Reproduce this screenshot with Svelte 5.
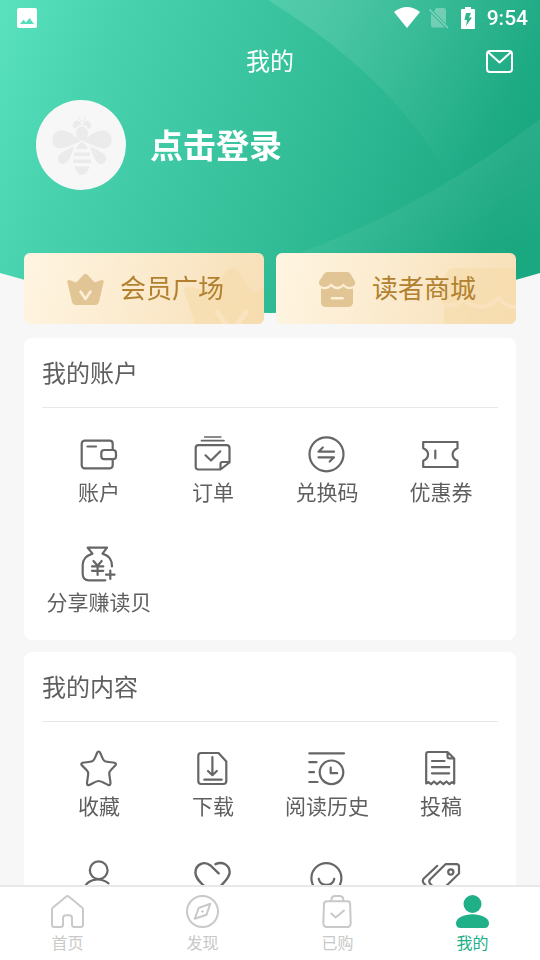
<script>
  const account = [
    { label: '账户', icon: 'wallet' },
    { label: '订单', icon: 'order' },
    { label: '兑换码', icon: 'exchange' },
    { label: '优惠券', icon: 'coupon' },
    { label: '分享赚读贝', icon: 'money' }
  ];
  const content = [
    { label: '收藏', icon: 'star' },
    { label: '下载', icon: 'download' },
    { label: '阅读历史', icon: 'history' },
    { label: '投稿', icon: 'draft' },
    { name: '关注', icon: 'person' },
    { name: '喜欢', icon: 'heart' },
    { name: '评论', icon: 'smile' },
    { name: '标签', icon: 'tag' }
  ];
  const tabs = [
    { label: '首页', icon: 'home' },
    { label: '发现', icon: 'compass' },
    { label: '已购', icon: 'bag' },
    { label: '我的', icon: 'me', active: true }
  ];

  const icons = {
    wallet:
      '<rect x=".7" y="4.7" width="31" height="27.6" rx="3"/><rect x="20.3" y="14" width="14.7" height="9.2" rx="3" fill="#fff"/><path d="M6.5 10.5H15"/>',
    order:
      '<path d="M9.500 1H26" stroke-width="1.300"/><path d="M6.500 4.700H29" stroke-width="1.700"/><path d="M25.500 33.500H3.500Q.7 33.500.7 30.700V12Q.7 9.200 3.500 9.200H31.500Q34.500 9.200 34.500 12V26.500ZM25.500 33V28Q25.500 26 27.500 26H34"/><path d="M10.500 19.300 16 24.500 25.300 15.300"/>',
    exchange:
      '<circle cx="17.500" cy="18.300" r="17"/><path d="M25 15.700H9.500L13.800 11.500M9.500 21.300H25L20.700 25.500"/>',
    coupon:
      '<path d="M.2 6H34.500V12.300C28 15 28 22 34.500 24.700V31H.2V24.700C6.700 22 6.700 15 .2 12.300Z"/><path d="M12.300 14.500V22.300"/>',
    money:
      '<path d="M24.300 34.300H8Q1.700 34.300 1.700 28V19C1.700 12 6 9.500 11.500 7.600L6.700 1.700H26L21.500 7.600C27.500 9.500 31 12.500 31 20.500"/><path d="M12.500 15 16.600 19.800 20.700 15M16.600 19.800V29M11 20.400H22.300M11 24.800H22.300M29.300 24.500V33M25 28.700H33.500"/>',
    star:
      '<path d="M17.600 1.500Q18.700 1.500 19.300 3C20.600 6 22 10.500 24 11.300C26.500 12.200 31 12.200 33.500 12.800Q35.700 13.800 34.500 15.300C32.500 17.500 28.500 20.500 28.300 22.800C28.100 25.500 29.500 30.500 29.500 33.500Q29 35.800 27.200 35C24 33.500 20.500 31 17.600 31C14.700 31 11.500 33.500 8.200 35Q6.300 35.800 6 33.500C6 30.500 7.400 25.500 7.200 22.800C7 20.500 2.700 17.500.8 15.300Q-.5 13.800 1.700 12.800C4.200 12.200 8.800 12.200 11.200 11.300C13.300 10.500 14.700 6 16 3Q16.500 1.500 17.600 1.500Z"/>',
    download:
      '<path d="M6 3H23.500L31.300 11.500V31Q31.300 34 28.300 34H6Q3.300 34 3.300 31V6Q3.300 3 6 3Z"/><path d="M17.400 7V25M13 21 17.400 25.200 21.800 21M9.300 29.700H26.700"/>',
    history:
      '<path d="M.3 3.300H35M.3 12.200H7.500M.3 22.200H5M.3 32H8.500"/><circle cx="22.500" cy="22.300" r="11.800"/><path d="M21.700 17.500V23.200H28.200"/>',
    draft:
      '<path d="M24.500 2H5.200Q3.200 2 3.200 4V33.500L5.500 32.200 8 34.200 11 31.500 14 34.200 17.200 31.500 20.400 34.200 23.500 31.500 26.500 34.200 29 32.200 31.200 33.500V8.500ZM24.500 2.500V6.500Q24.500 8.300 26.300 8.300H31"/><path d="M9 11H21.500M9 17.200H26.200M9 23.300H26.200"/>',
    person:
      '<circle cx="17.700" cy="10.300" r="8.900"/><path d="M4.500 25.500C9 18.500 20 17.500 27.500 23.300M4.500 25.500Q2 29 2 34H34"/>',
    heart:
      '<path d="M23.700 13.300 15.500 5.500C9 .3.500 4.500.4 12.500C.4 17.500 4 21 8 25L17.700 34 27 24.500C31 20.500 34.700 17 34.700 12.300C34.500 5 27.500.8 20.500 4.200" stroke-width="2.400"/>',
    smile:
      '<circle cx="17.400" cy="18.200" r="15"/><path d="M9.700 18.700C11.500 27 23.500 27 25.300 18.700"/>',
    tag:
      '<path d="M22.500 4.200H33.500Q36 4.200 36 6.700V13.500L18 31Q16 32 14.500 31L7 23.500Q5.500 21.500 7 19.500ZM14.300 5.800.3 19Q-1 21 .5 23L8.500 31.500"/><circle cx="27.800" cy="12" r="2.600"/>',
    home:
      '<path d="M1 14.500Q1 13.300 2 12.500L15 1.700Q16.500.5 18 1.700L31 12.500Q32 13.300 32 14.500V29.500Q32 32 29.500 32H23.500Q21 32 21 29.500V23.500Q21 20.300 18 20.300H15Q12 20.300 12 23.500V29.500Q12 32 9.500 32H3.500Q1 32 1 29.500Z"/>',
    compass:
      '<circle cx="16.500" cy="16.500" r="15.500"/><path d="M24.300 8.700 20.500 19.700 8.700 23.800 12.700 13Z"/><path d="M15.500 16.500H17.500M16.500 15.500V17.500" stroke-width="1"/>',
    bag:
      '<path d="M6 6.300H26.500Q29 6.300 29.100 8.800L29.700 28Q29.700 32 26.200 32H6Q2.200 32 2.300 28L3 8.800Q3.200 6.300 6 6.300ZM10.500 6V4.500Q10.500 1 14 1H18.500Q22.300 1 22.300 4.500V6"/><path d="M10.300 18.500 14.700 22.500 23 15.500"/>',
    me:
      '<circle cx="16.500" cy="9" r="9" fill="currentColor" stroke="none"/><path d="M0 28C0 23 8 19.200 16.500 19.200S33 23 33 28Q33 33 28.500 33H4.500Q0 33 0 28Z" fill="currentColor" stroke="none"/>'
  };
</script>

{#snippet grid(items)}
  <div class="grid">
    {#each items as item}
      <button class="item" type="button" aria-label={item.name}>
        <svg class="icon" viewBox="0 0 36 36">{@html icons[item.icon]}</svg>
        {#if item.label}<span class="label">{item.label}</span>{/if}
      </button>
    {/each}
  </div>
{/snippet}

<div class="screen">
  <main>
    <svg class="hero" viewBox="0 0 540 313" preserveAspectRatio="none">
      <defs>
        <linearGradient id="sky" gradientUnits="userSpaceOnUse" x1="0" y1="20" x2="500" y2="210">
          <stop offset="0" stop-color="#59e1bd" />
          <stop offset=".2" stop-color="#48d2ae" />
          <stop offset=".6" stop-color="#33be98" />
          <stop offset="1" stop-color="#1aa881" />
        </linearGradient>
        <linearGradient id="arc" gradientUnits="userSpaceOnUse" x1="330" y1="0" x2="500" y2="110">
          <stop offset="0" stop-color="#fff" stop-opacity=".12" />
          <stop offset="1" stop-color="#fff" stop-opacity="0" />
        </linearGradient>
        <linearGradient id="arc2" gradientUnits="userSpaceOnUse" x1="430" y1="170" x2="480" y2="270">
          <stop offset="0" stop-color="#fff" stop-opacity=".07" />
          <stop offset="1" stop-color="#fff" stop-opacity="0" />
        </linearGradient>
        <clipPath id="curve"><path d="M0 0H540V273Q270 353 0 273Z" /></clipPath>
      </defs>
      <g clip-path="url(#curve)">
        <path d="M0 0H540V313H0Z" fill="url(#sky)" />
        <path d="M268 0Q445 110 480 260L540 290V0Z" fill="url(#arc)" />
        <path d="M540 119Q420 212 280 260V313H540Z" fill="url(#arc2)" />
      </g>
    </svg>

    <div class="status">
      <svg width="20" height="20" viewBox="0 0 20 20"><path fill="#fff" fill-rule="evenodd" d="M2 0H18Q20 0 20 2V18Q20 20 18 20H2Q0 20 0 18V2Q0 0 2 0ZM3 16H17L12.500 10 9 14.500 6.500 11.800Z" /></svg>
      <div class="signals">
        <svg width="26" height="22" viewBox="0 0 26 22"><path fill="#fff" d="M0 5Q13-5 26 5L13 21Z" /></svg>
        <svg width="20" height="22" viewBox="0 0 20 22"><path fill="#fff" opacity=".3" d="M7 1H15Q17 1 17 3V17L5 4.500ZM2 6.500 16 20.500H4Q2 20.500 2 18.500Z" /><path d="M.5 2.500 19 21" stroke="#fff" stroke-width="1.500" opacity=".4" /></svg>
        <svg width="14" height="22" viewBox="0 0 14 22"><path fill="#fff" fill-rule="evenodd" d="M4 0H10V2H13Q14 2 14 3V21Q14 22 13 22H1Q0 22 0 21V3Q0 2 1 2H4ZM5 6 3.500 13H6L5 19 11 10.500H8L10 6Z" /></svg>
        <time>9:54</time>
      </div>
    </div>

    <header>
      <h1>我的</h1>
      <button class="mail" type="button" aria-label="消息">
        <svg width="27" height="23" viewBox="0 0 27 23" fill="none" stroke="#fff" stroke-width="2" stroke-linejoin="round"><rect x="1" y="1" width="25" height="21" rx="3" /><path d="M2 2 13.500 12.500 25 2" /></svg>
      </button>
    </header>

    <button class="profile" type="button">
      <svg width="90" height="90" viewBox="0 0 90 90">
        <circle cx="45" cy="45" r="45" fill="#f7f7f7" />
        <g fill="#ebebeb">
          <circle cx="41" cy="25" r="4.300" /><circle cx="51" cy="25" r="4.300" />
          <path d="M45.500 22 42.500 17M46.500 22 49.500 17" stroke="#ebebeb" stroke-width="1" />
          <ellipse cx="46" cy="33.500" rx="7.500" ry="9" fill="#f7f7f7" />
          <ellipse cx="46" cy="33.500" rx="6" ry="7.300" />
          <path d="M44.500 41.500Q34 30 25 30.500C14 31 14 46 22 48C29 49 37 44 44.500 41.500ZM47.500 41.500Q58 30 67 30.500C78 31 78 46 70 48C63 49 55 44 47.500 41.500Z" />
          <path d="M38 46.500Q34 60 30 63C24 67 19 59 24 54Q27 51 38 46.500ZM54 46.500Q58 60 62 63C68 67 73 59 68 54Q65 51 54 46.500Z" />
          <path d="M46 42Q50 44 52 49H40Q42 44 46 42ZM38 52.500H54V56H38ZM37 59.500H55V63H37ZM38.500 66.500H53.500Q51 75 46 75T38.500 66.500Z" />
        </g>
      </svg>
      <span>点击登录</span>
    </button>

    <div class="tiles">
      <button class="tile" type="button">
        <svg class="mark" width="240" height="71" viewBox="0 0 240 71">
          <path fill="#f6d9a5" opacity=".5" d="M171 71 160 38Q160 32 167 34L185 39Q188 39 190 36L203 18Q208 12 214 18L227 37Q229 40 232 39L240 35V71Z" />
          <path d="M193 59 208 80 222 59" fill="none" stroke="#fae4c0" stroke-width="5" stroke-linecap="round" />
        </svg>
        <svg width="37" height="36" viewBox="0 0 37 36">
          <path fill="#e2c594" d="M.3 10.500Q.5 8.500 3 9.200L8.500 11.200Q10 11.300 11 9.800L16.500 3.700Q18.500 1.700 20.500 3.700L26 9.800Q27 11.300 28.500 11.200L34 9.200Q36.500 8.500 36.700 10.500L32 31Q31 34 28 34H9Q6 34 5 31Z" />
          <path d="M13.500 20.500 18.500 28 23.500 20.500" fill="none" stroke="#fdf0d9" stroke-width="2.500" stroke-linecap="round" stroke-linejoin="round" />
        </svg>
        <span>会员广场</span>
      </button>
      <button class="tile" type="button">
        <svg class="mark" width="240" height="71" viewBox="0 0 240 71">
          <path fill="#f6d9a5" opacity=".5" d="M178 15H240V71H168V53L165 47 170 21Q172 15 178 15Z" />
          <path d="M168 51Q179 55 187 46Q204 62 223 45Q230 54 240 54" fill="none" stroke="#f9e2bd" stroke-width="4" stroke-linejoin="round" />
        </svg>
        <svg width="37" height="36" viewBox="0 0 37 36">
          <path fill="#e2c594" d="M8.500 1H28.500Q30.500 1 31.500 3L36 10.500Q37 15.500 31 16Q27 16 24.500 12.500Q18.500 19 12 12.500Q9 16 5 16Q-.5 15 0 10.500L5 3Q6 1 8.500 1Z" />
          <path fill="#e2c594" d="M2 17.500Q8 19.500 12 15.500Q18.500 21 24.500 15.500Q28 19.500 34 17.500V31Q34 36 29 36H7Q2 36 2 31Z" />
          <path d="M13 27.300H23.500" stroke="#fdf0d9" stroke-width="2.500" stroke-linecap="round" />
        </svg>
        <span>读者商城</span>
      </button>
    </div>

    <section class="card">
      <h2>我的账户</h2>
      {@render grid(account)}
    </section>
    <section class="card">
      <h2>我的内容</h2>
      {@render grid(content)}
    </section>
  </main>

  <nav>
    {#each tabs as tab}
      <a href="#{tab.icon}" class:active={tab.active}>
        <svg class="icon" viewBox="0 0 33 33">{@html icons[tab.icon]}</svg>
        <span>{tab.label}</span>
      </a>
    {/each}
  </nav>
</div>

<style>
  :global(body) {
    background: #f7f7f7;
  }
  .screen {
    display: flex;
    flex-direction: column;
    height: 100vh;
    font-family: Roboto, 'Noto Sans CJK SC', sans-serif;
    color: #5f5f5f;
  }
  svg {
    display: block;
    flex: none;
  }
  button {
    border: 0;
    padding: 0;
    background: none;
    font: inherit;
    color: inherit;
    cursor: pointer;
  }
  h1,
  h2 {
    margin: 0;
    font-weight: 400;
    font-size: 24px;
  }
  main {
    position: relative;
    flex: 1;
    min-height: 0;
    overflow-y: auto;
    scrollbar-width: none;
  }
  .hero {
    position: absolute;
    top: 0;
    left: 0;
    z-index: -1;
    width: 100%;
    height: 313px;
  }
  .status {
    display: flex;
    justify-content: space-between;
    align-items: center;
    height: 36px;
    padding: 0 12px 0 17px;
    color: #fff;
  }
  .signals {
    display: flex;
    align-items: center;
    gap: 12px;
  }
  .signals svg:nth-child(1) {
    margin-right: -3px;
  }
  time {
    font-size: 21px;
    font-weight: 500;
    line-height: 36px;
  }
  header {
    display: grid;
    grid-template-columns: 1fr auto 1fr;
    align-items: center;
    height: 52px;
    padding: 0 27px;
    color: #fff;
  }
  h1 {
    grid-column: 2;
    line-height: 36px;
  }
  .mail {
    justify-self: end;
    padding-bottom: 2px;
  }
  .profile {
    display: flex;
    align-items: center;
    gap: 24px;
    margin: 12px 36px 0;
    color: #fff;
    font-size: 33px;
    font-weight: 700;
    line-height: 48px;
  }
  .profile span {
    padding-top: 4px;
  }
  .tiles {
    display: flex;
    gap: 12px;
    margin: 63px 24px 0;
  }
  .tile {
    position: relative;
    display: flex;
    flex: 1;
    align-items: center;
    justify-content: center;
    gap: 16px;
    height: 71px;
    padding: 0 0 0 3px;
    overflow: hidden;
    border-radius: 6px;
    background: linear-gradient(105deg, #fff5e2, #f7dfb7);
    color: #b1812f;
    font-size: 26px;
    line-height: 38px;
  }
  .mark {
    position: absolute;
    top: 0;
    right: 0;
  }
  .tile span,
  .tile svg:not(.mark) {
    position: relative;
  }
  .card {
    margin: 14px 24px 0;
    padding: 0 18px;
    border-radius: 8px;
    background: #fff;
  }
  .card + .card {
    margin-top: 12px;
  }
  h2 {
    padding-top: 4px;
    border-bottom: 1px solid #e8e8e8;
    line-height: 65px;
  }
  .grid {
    display: grid;
    grid-template-columns: repeat(4, 1fr);
    padding-top: 12px;
  }
  .item {
    display: flex;
    flex-direction: column;
    align-items: center;
    height: 110px;
    padding-top: 16px;
  }
  .icon {
    width: 36px;
    height: 36px;
    overflow: visible;
    fill: none;
    stroke: currentColor;
    stroke-width: 2;
    stroke-linecap: round;
    stroke-linejoin: round;
  }
  .item .icon {
    color: #666;
    stroke-width: 2.2;
  }
  .label {
    margin-top: 6px;
    font-size: 21px;
    line-height: 30px;
    white-space: nowrap;
  }
  nav {
    display: flex;
    height: 73px;
    border-top: 2px solid #e8e8e8;
    background: #fff;
  }
  nav a {
    display: flex;
    flex: 1;
    flex-direction: column;
    align-items: center;
    padding-top: 8px;
    color: #c9c9c9;
    font-size: 16px;
    line-height: 24px;
    text-decoration: none;
  }
  nav .icon {
    width: 33px;
    height: 33px;
    margin-bottom: 4px;
  }
  nav a.active {
    color: #20b088;
  }
</style>
